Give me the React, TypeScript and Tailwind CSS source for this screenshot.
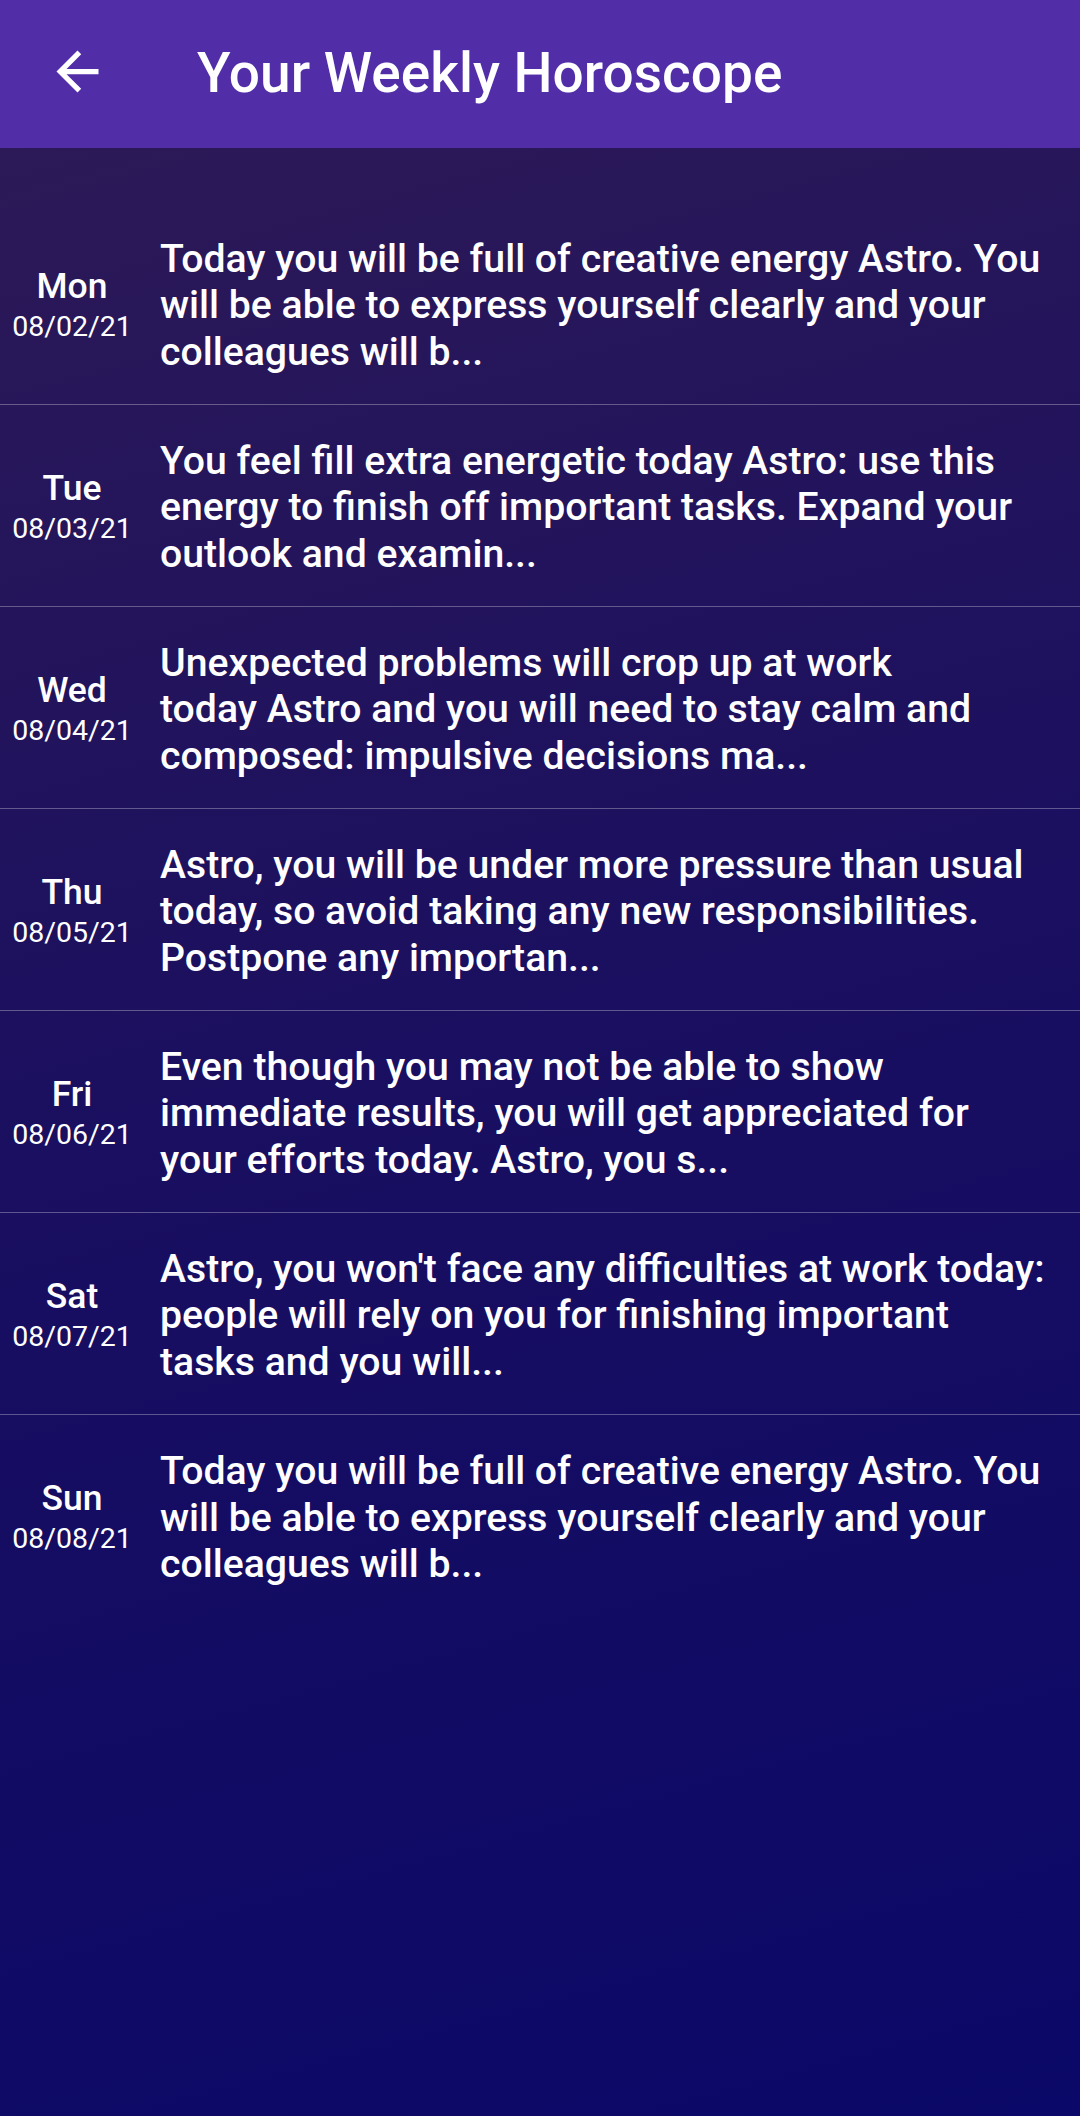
import React from "react";

const rows = [
  {
    day: "Mon",
    date: "08/02/21",
    lines: [
      "Today you will be full of creative energy Astro. You",
      "will be able to express yourself clearly and your",
      "colleagues will b...",
    ],
  },
  {
    day: "Tue",
    date: "08/03/21",
    lines: [
      "You feel fill extra energetic today Astro: use this",
      "energy to finish off important tasks. Expand your",
      "outlook and examin...",
    ],
  },
  {
    day: "Wed",
    date: "08/04/21",
    lines: [
      "Unexpected problems will crop up at work",
      "today Astro and you will need to stay calm and",
      "composed: impulsive decisions ma...",
    ],
  },
  {
    day: "Thu",
    date: "08/05/21",
    lines: [
      "Astro, you will be under more pressure than usual",
      "today, so avoid taking any new responsibilities.",
      "Postpone any importan...",
    ],
  },
  {
    day: "Fri",
    date: "08/06/21",
    lines: [
      "Even though you may not be able to show",
      "immediate results, you will get appreciated for",
      "your efforts today. Astro, you s...",
    ],
  },
  {
    day: "Sat",
    date: "08/07/21",
    lines: [
      "Astro, you won't face any difficulties at work today:",
      "people will rely on you for finishing important",
      "tasks and you will...",
    ],
  },
  {
    day: "Sun",
    date: "08/08/21",
    lines: [
      "Today you will be full of creative energy Astro. You",
      "will be able to express yourself clearly and your",
      "colleagues will b...",
    ],
  },
];

export default function App() {
  return (
    <div className="w-[1080px] h-[2116px] flex flex-col font-['Roboto',sans-serif] text-white overflow-hidden">
      <header className="h-[148px] shrink-0 bg-[#512DA8] flex items-center">
        <div className="w-[63px] h-[63px] ml-[46px] mb-[6px] shrink-0">
          <svg viewBox="0 0 24 24" width="63" height="63" fill="#ffffff">
            <path d="M20 11H7.83l5.59-5.59L12 4l-8 8 8 8 1.41-1.41L7.83 13H20v-2z" />
          </svg>
        </div>
        <h1 className="ml-[88px] text-[55px] font-medium leading-none mb-[2px]">
          Your Weekly Horoscope
        </h1>
      </header>
      <main className="flex-1 pt-[55px] bg-[linear-gradient(165deg,#2c1957_0%,#1a0f60_45%,#0a0868_100%)]">
        {rows.map((r, i) => (
          <div
            key={r.day}
            className={
              i < rows.length - 1
                ? "h-[202px] flex items-center border-b border-white/30"
                : "h-[202px] flex items-center"
            }
          >
            <div className="w-[144px] shrink-0 flex flex-col items-center">
              <span className="text-[35.5px] font-medium leading-[46px]">{r.day}</span>
              <span className="text-[28.5px] leading-[36px]">{r.date}</span>
            </div>
            <div className="ml-[16px] text-[39.2px] font-medium leading-[46.6px] mt-[4px]">
              {r.lines.map((l, j) => (
                <div key={j} className="whitespace-nowrap">
                  {l}
                </div>
              ))}
            </div>
          </div>
        ))}
      </main>
    </div>
  );
}
